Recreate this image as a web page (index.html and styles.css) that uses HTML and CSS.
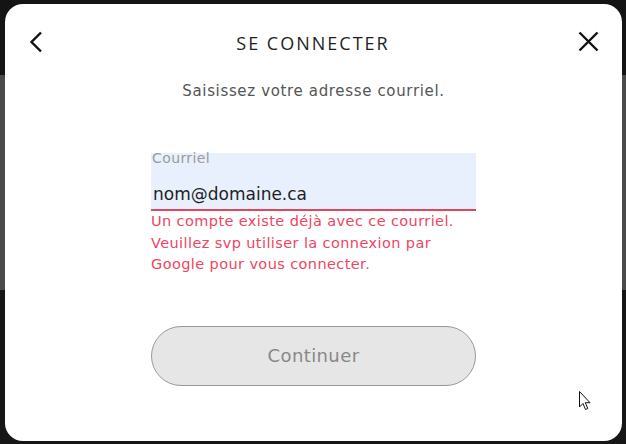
FILE: index.html
```html
<!DOCTYPE html>
<html lang="fr">
<head>
    <meta charset="UTF-8">
    <meta name="viewport" content="width=device-width, initial-scale=1.0">
    <title>Se connecter</title>
    <link rel="stylesheet" href="styles.css">
</head>
<body>
    <div class="modal">
        <div class="modal-header">
            <button class="icon-button" aria-label="Retour">
                <svg width="24" height="24" viewBox="0 0 24 24"><path d="M17 2.5 L7.5 12 L17 21.5" fill="none" stroke="#111" stroke-width="2.4"/></svg>
            </button>
            <h1>SE CONNECTER</h1>
            <button class="icon-button" aria-label="Fermer">
                <svg width="24" height="24" viewBox="0 0 24 24"><path d="M3.5 2.5 L21.5 20.5 M21.5 2.5 L3.5 20.5" fill="none" stroke="#111" stroke-width="2.4"/></svg>
            </button>
        </div>

        <p class="subtitle">Saisissez votre adresse courriel.</p>

        <div class="form">
            <div class="field">
                <label for="email">Courriel</label>
                <input type="text" id="email" value="nom@domaine.ca">
            </div>
            <div class="error">Un compte existe déjà avec ce courriel. Veuillez svp utiliser la connexion par Google pour vous connecter.</div>
            <button class="continue" disabled>Continuer</button>
        </div>

        <svg class="cursor" width="13" height="20" viewBox="0 0 13 20"><path d="M0.5 0.5 L0.5 16 L4 12.5 L6.5 18.5 L8.8 17.5 L6.3 11.7 L11 11.7 Z" fill="#fff" stroke="#111" stroke-width="1"/></svg>
    </div>
</body>
</html>
```

FILE: styles.css
```css
body {
    margin: 0;
    height: 444px;
    overflow: hidden;
    background: linear-gradient(#141414 0, #141414 75px, #4a4a4a 75px, #4a4a4a 290px, #161616 290px);
    font-family: 'DejaVu Sans', sans-serif;
}
.modal {
    position: relative;
    margin: 4px 4px 0 5px;
    height: 437px;
    background-color: #ffffff;
    border-radius: 18px;
}
.modal-header {
    display: flex;
    align-items: center;
    justify-content: space-between;
    padding: 25px 22px 0 19px;
}
.modal-header h1 {
    margin: 0;
    padding: 2px 0 0 2px;
    font-family: 'Open Sans', sans-serif;
    font-size: 18px;
    line-height: 24px;
    font-weight: 400;
    color: #1e1e1e;
    letter-spacing: 2px;
}
.icon-button {
    background: none;
    border: none;
    padding: 0;
    width: 24px;
    height: 24px;
    display: block;
}
.icon-button svg {
    display: block;
}
.subtitle {
    margin: 26px 0 0 0;
    text-align: center;
    font-size: 15px;
    line-height: 20px;
    color: #555555;
    letter-spacing: 0.65px;
}
.form {
    width: 325px;
    margin: 52px auto 0 auto;
}
.field {
    background-color: #e8f0fe;
    border-bottom: 2px solid #e0475c;
    height: 56px;
    display: flex;
    flex-direction: column;
}
.field label {
    font-size: 14px;
    color: #9a9a9a;
    line-height: 13px;
    letter-spacing: 0.4px;
    padding-left: 1px;
    margin-top: -1px;
}
.field input {
    font-family: 'DejaVu Sans', sans-serif;
    font-size: 17px;
    color: #1f1f1f;
    background: none;
    border: none;
    outline: none;
    padding: 0 2px;
    margin-top: 19px;
}
.error {
    margin-top: 0;
    font-size: 14.5px;
    line-height: 21.5px;
    letter-spacing: 0.4px;
    color: #ee4560;
}
.continue {
    display: block;
    width: 325px;
    height: 60px;
    margin-top: 50px;
    background-color: #e6e6e6;
    border: 1px solid #999999;
    border-radius: 30px;
    font-family: 'DejaVu Sans', sans-serif;
    font-size: 18px;
    letter-spacing: 0.4px;
    color: #888888;
}
.cursor {
    position: absolute;
    left: 574px;
    top: 387px;
}
```
